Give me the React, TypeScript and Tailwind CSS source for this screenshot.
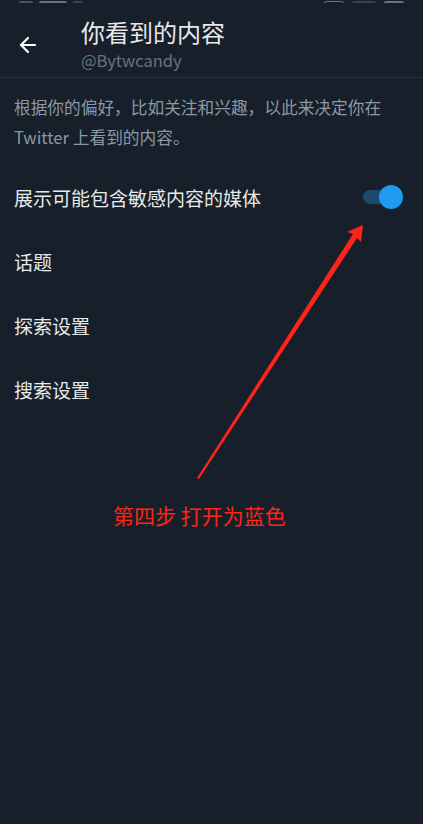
import { ArrowLeft } from 'lucide-react';

const font = { fontFamily: '"Noto Sans CJK SC", "Noto Sans", sans-serif' };

function Row({ label, toggle }: { label: string; toggle?: boolean }) {
  return (
    <div className="flex items-center justify-between h-[64px] pl-[14px] pr-[20px]">
      <span className="text-[19px] text-[#e7e9ea] leading-none">{label}</span>
      {toggle && (
        <div className="relative w-[40px] h-[24px] flex items-center">
          <div className="w-[36px] h-[14px] rounded-full bg-[#1c4a6e]" />
          <div className="absolute right-0 top-0 w-[24px] h-[24px] rounded-full bg-[#1d9bf0]" />
        </div>
      )}
    </div>
  );
}

export default function App() {
  return (
    <div className="relative w-[423px] h-[824px] bg-[#17202a] overflow-hidden" style={font}>
      {/* Status bar, cut off at the top edge */}
      <div className="h-[3px] overflow-hidden flex justify-between items-end px-[18px]">
        <div className="flex gap-[4px] items-end -mb-[10px]">
          <div className="w-[16px] h-[12px] bg-[#4a535d] rounded-sm" />
          <div className="w-[30px] h-[12px] bg-[#6a727b] rounded-sm" />
          <div className="w-[12px] h-[12px] bg-[#3a434d] rounded-sm" />
        </div>
        <div className="flex gap-[6px] items-end -mb-[10px]">
          <div className="w-[22px] h-[12px] border border-[#6a727b] rounded-sm" />
          <div className="w-[26px] h-[12px] bg-[#3a434d] rounded-sm" />
          <div className="w-[22px] h-[12px] bg-[#6a727b] rounded-sm" />
        </div>
      </div>

      {/* Header */}
      <div className="flex items-start h-[75px] border-b border-[#27323d]">
        <div className="w-[81px] pl-[16px] pt-[30px]">
          <ArrowLeft className="w-[24px] h-[24px] text-white" strokeWidth={2.2} />
        </div>
        <div className="flex flex-col pt-[14px]">
          <span className="text-[24px] text-[#e7e9ea] leading-[30px]">你看到的内容</span>
          <span className="text-[16.5px] text-[#66737f] leading-[22px] mt-[2px]">@Bytwcandy</span>
        </div>
      </div>

      {/* Description */}
      <p className="px-[14px] pt-[14px] text-[16.7px] leading-[30px] text-[#8b98a5]">
        根据你的偏好，比如关注和兴趣，以此来决定你在
        <br />
        Twitter 上看到的内容。
      </p>

      <div className="mt-[13px]">
        <Row label="展示可能包含敏感内容的媒体" toggle />
        <Row label="话题" />
        <Row label="探索设置" />
        <Row label="搜索设置" />
      </div>

      <div className="mt-[84px] pl-[113px] text-[21px] text-[#ff2318] leading-none">第四步 打开为蓝色</div>

      {/* Red annotation arrow */}
      <svg className="absolute left-0 top-0 pointer-events-none" width="423" height="824" viewBox="0 0 423 824">
        <path d="M197 478 L199 479 L357 238 L361 242 L363 225 L347 232 L353 234 Z" fill="#ff2318" />
      </svg>
    </div>
  );
}
